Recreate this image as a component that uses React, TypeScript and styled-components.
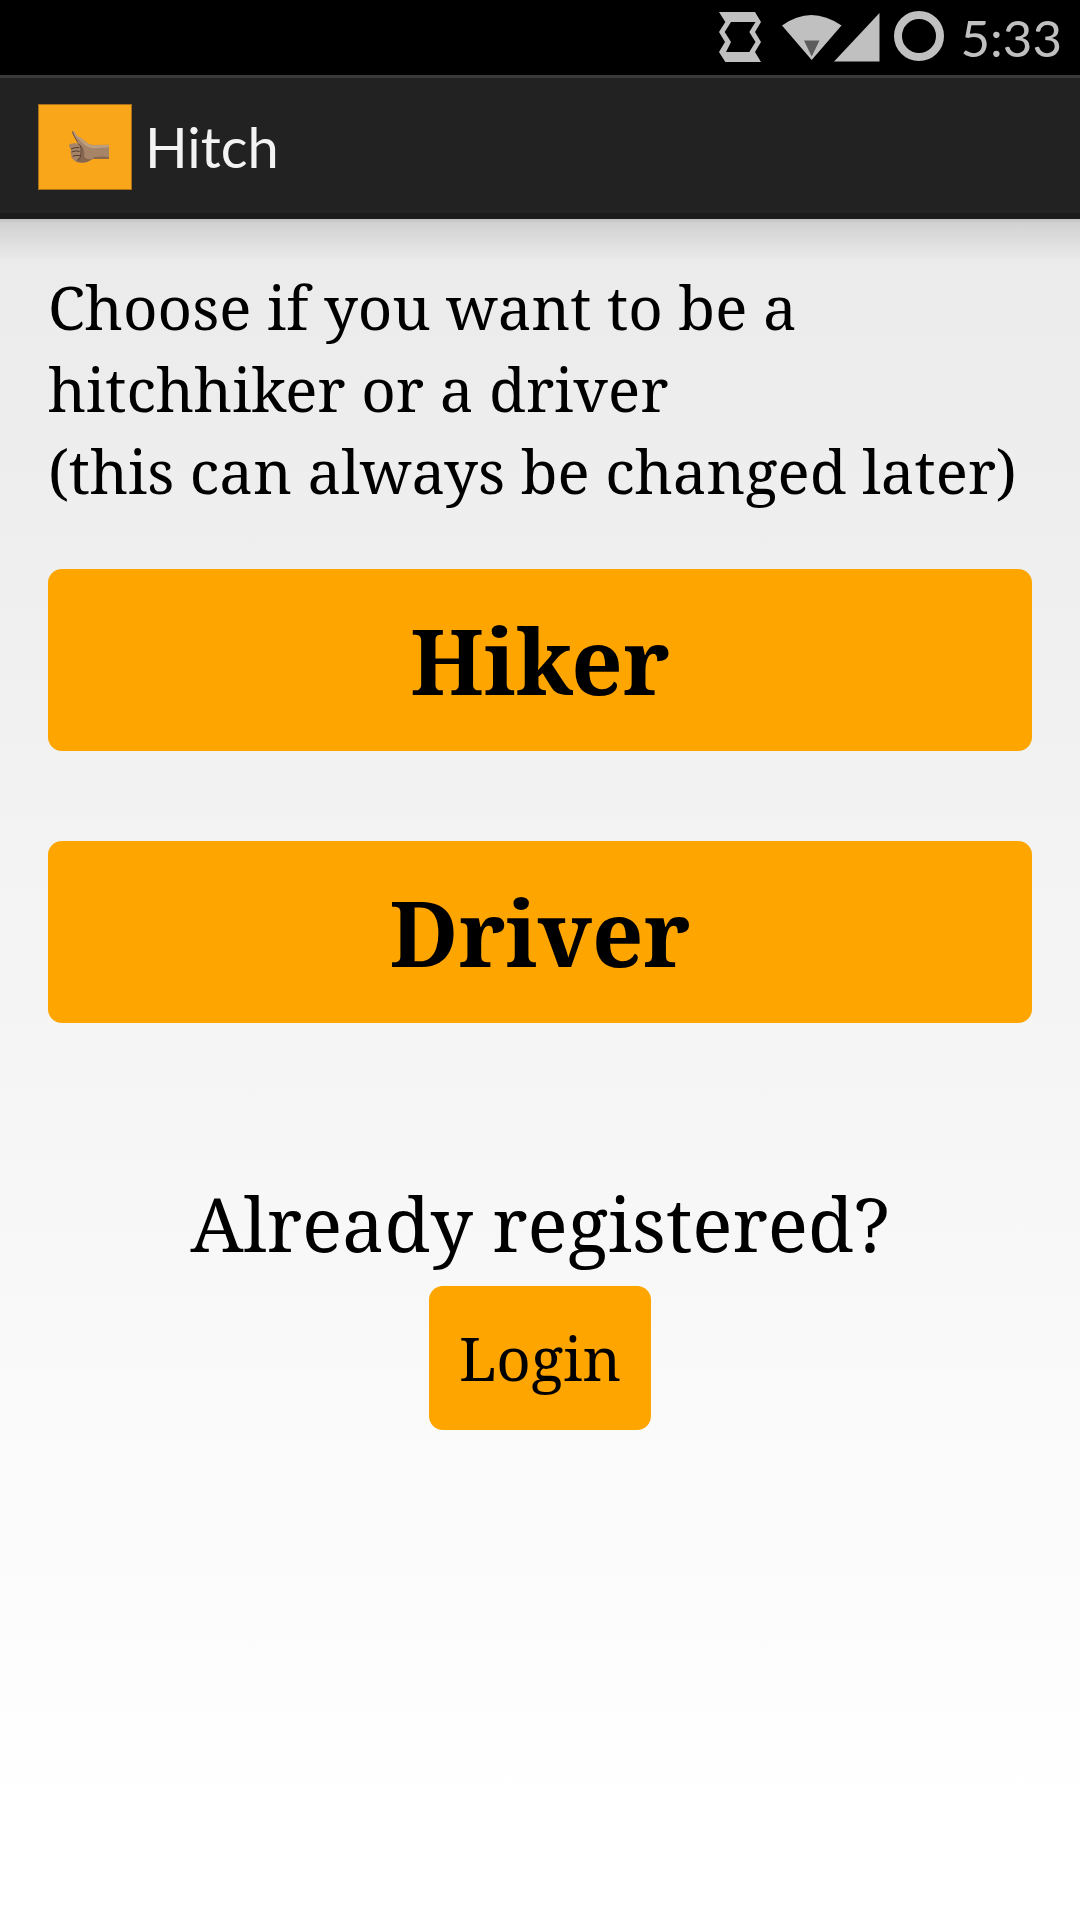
import React from "react";
import styled, { createGlobalStyle } from "styled-components";

const GlobalStyle = createGlobalStyle`
  *, *::before, *::after { box-sizing: border-box; }
  body { margin: 0; }
`;

const serif = `"Noto Serif", "Droid Serif", "DejaVu Serif", serif`;
const sans = `Lato, "Open Sans", sans-serif`;

const Screen = styled.div`
  display: flex;
  flex-direction: column;
  min-height: 100vh;
  background: linear-gradient(#eaeaea, #ebebeb 13%, #ffffff 95%);
  color: #000;
  font-family: ${serif};
`;

const StatusBar = styled.div`
  display: flex;
  align-items: center;
  justify-content: flex-end;
  height: 75px;
  padding: 0 18px;
  background: #000;
  color: #c0c0c0;
  font-family: ${sans};
`;

const StatusIcons = styled.svg`
  display: block;
  width: 226px;
  height: 75px;
`;

const Clock = styled.time`
  margin-left: 17px;
  font-size: 51px;
  line-height: 75px;
`;

const AppBar = styled.header`
  display: flex;
  align-items: center;
  gap: 13px;
  height: 144px;
  padding: 2px 38px 0;
  border-top: 3px solid #3a3a3a;
  border-bottom: 6px solid #1b1b1b;
  background: #222;
  color: #f3f3f3;
  font-family: ${sans};
`;

const AppIcon = styled.svg`
  display: block;
  width: 94px;
  height: 86px;
`;

const Title = styled.h1`
  margin: 0;
  font-size: 56px;
  font-weight: 400;
  line-height: 66px;
`;

const BarShadow = styled.div`
  height: 42px;
  border-top: 3px solid rgba(0, 0, 0, 0.15);
  background: linear-gradient(rgba(0, 0, 0, 0.11), rgba(0, 0, 0, 0));
`;

const Content = styled.main`
  display: flex;
  flex-direction: column;
  padding: 5px 48px 48px;
`;

const Intro = styled.p`
  margin: 0;
  font-size: 60px;
  line-height: 82px;
`;

const Choices = styled.div`
  display: flex;
  flex-direction: column;
  gap: 90px;
  margin-top: 57px;
`;

const Button = styled.button<{ $size: "large" | "small" }>`
  height: ${(p) => (p.$size === "large" ? 182 : 144)}px;
  padding: 0 30px;
  border: 0;
  border-radius: 14px;
  background: #ffa500;
  color: #000;
  font-family: inherit;
  font-size: ${(p) => (p.$size === "large" ? 90 : 60)}px;
  font-weight: ${(p) => (p.$size === "large" ? 700 : 400)};
  cursor: pointer;
`;

const Registered = styled.section`
  display: flex;
  flex-direction: column;
  align-items: center;
  margin-top: 149px;
`;

const Question = styled.h2`
  margin: 0 0 12px;
  font-size: 75px;
  font-weight: 400;
  line-height: 102px;
`;

function Hand() {
  return (
    <AppIcon viewBox="0 0 94 86" aria-hidden="true">
      <rect width="94" height="86" fill="#a66f18" />
      <rect x="1" y="1" width="92" height="84" fill="#faa61a" />
      <g transform="translate(22 6) scale(0.3333)">
        <path
          d="M37 63 L43 65 Q47 75 56 81 Q68 85 78 96 Q86 105 98 105 L147 104 L147 147 Q118 144 98 147 Q84 158 61 158 Q43 155 41 149 Q33 145 34 136 Q30 128 33 118 Q26 113 27 104 Q34 99 54 100 Q48 88 38 72 Z"
          fill="#a58468"
        />
        <path d="M38 64 Q42 74 51 83 Q62 92 72 103 Q84 114 104 115 L147 112 L147 105 L98 106 Q85 105 78 97 Q67 85 55 81 Q47 75 43 65 Z" fill="#bda080" />
        <path d="M58 101 Q68 116 65 133 Q63 148 48 154 Q66 161 83 155 L98 147 Q78 151 72 139 Q77 116 58 101 Z" fill="#86664e" />
        <path d="M37 64 Q41 78 53 97" fill="none" stroke="#6b503e" strokeWidth="3" />
        <path d="M55 101 Q66 110 63 127 Q64 144 52 151 M33 117 Q45 111 58 113 M35 126 Q46 121 59 124 M38 139 Q48 134 60 137" fill="none" stroke="#513a2c" strokeWidth="3" />
        <path d="M101 142 Q124 137 147 141 L147 147 L99 147 Z" fill="#8a684d" />
      </g>
    </AppIcon>
  );
}

export default function App() {
  return (
    <>
      <GlobalStyle />
      <Screen>
        <StatusBar>
          <StatusIcons viewBox="718 0 226 75" role="img" aria-label="Rotation, Wi-Fi, signal, battery">
            <path
              fill="#c0c0c0"
              fillRule="evenodd"
              d="M719 12H755L761 22L755 32L761 42L755 52L761 62H725.300L719 52L725 42L719 32L725.300 22ZM731 22L724.700 32L731 42L726 52H749.300L755.500 42L749.300 32L755.500 22Z"
            />
            <path fill="#c0c0c0" d="M782 25.500Q811 4.500 841.500 25.500L811.700 60Z" />
            <path fill="#5c5c5c" d="M804 40.500H819.500L811.700 56.500Z" />
            <path fill="#c0c0c0" d="M834 61.500L879.500 13V61.500Z" />
            <circle cx="919" cy="36" r="21" fill="none" stroke="#c0c0c0" strokeWidth="8" />
          </StatusIcons>
          <Clock>5:33</Clock>
        </StatusBar>
        <AppBar>
          <Hand />
          <Title>Hitch</Title>
        </AppBar>
        <BarShadow />
        <Content>
          <Intro>
            Choose if you want to be a<br />
            hitchhiker or a driver
            <br />
            (this can always be changed later)
          </Intro>
          <Choices>
            <Button type="button" $size="large">Hiker</Button>
            <Button type="button" $size="large">Driver</Button>
          </Choices>
          <Registered>
            <Question>Already registered?</Question>
            <Button type="button" $size="small">Login</Button>
          </Registered>
        </Content>
      </Screen>
    </>
  );
}
